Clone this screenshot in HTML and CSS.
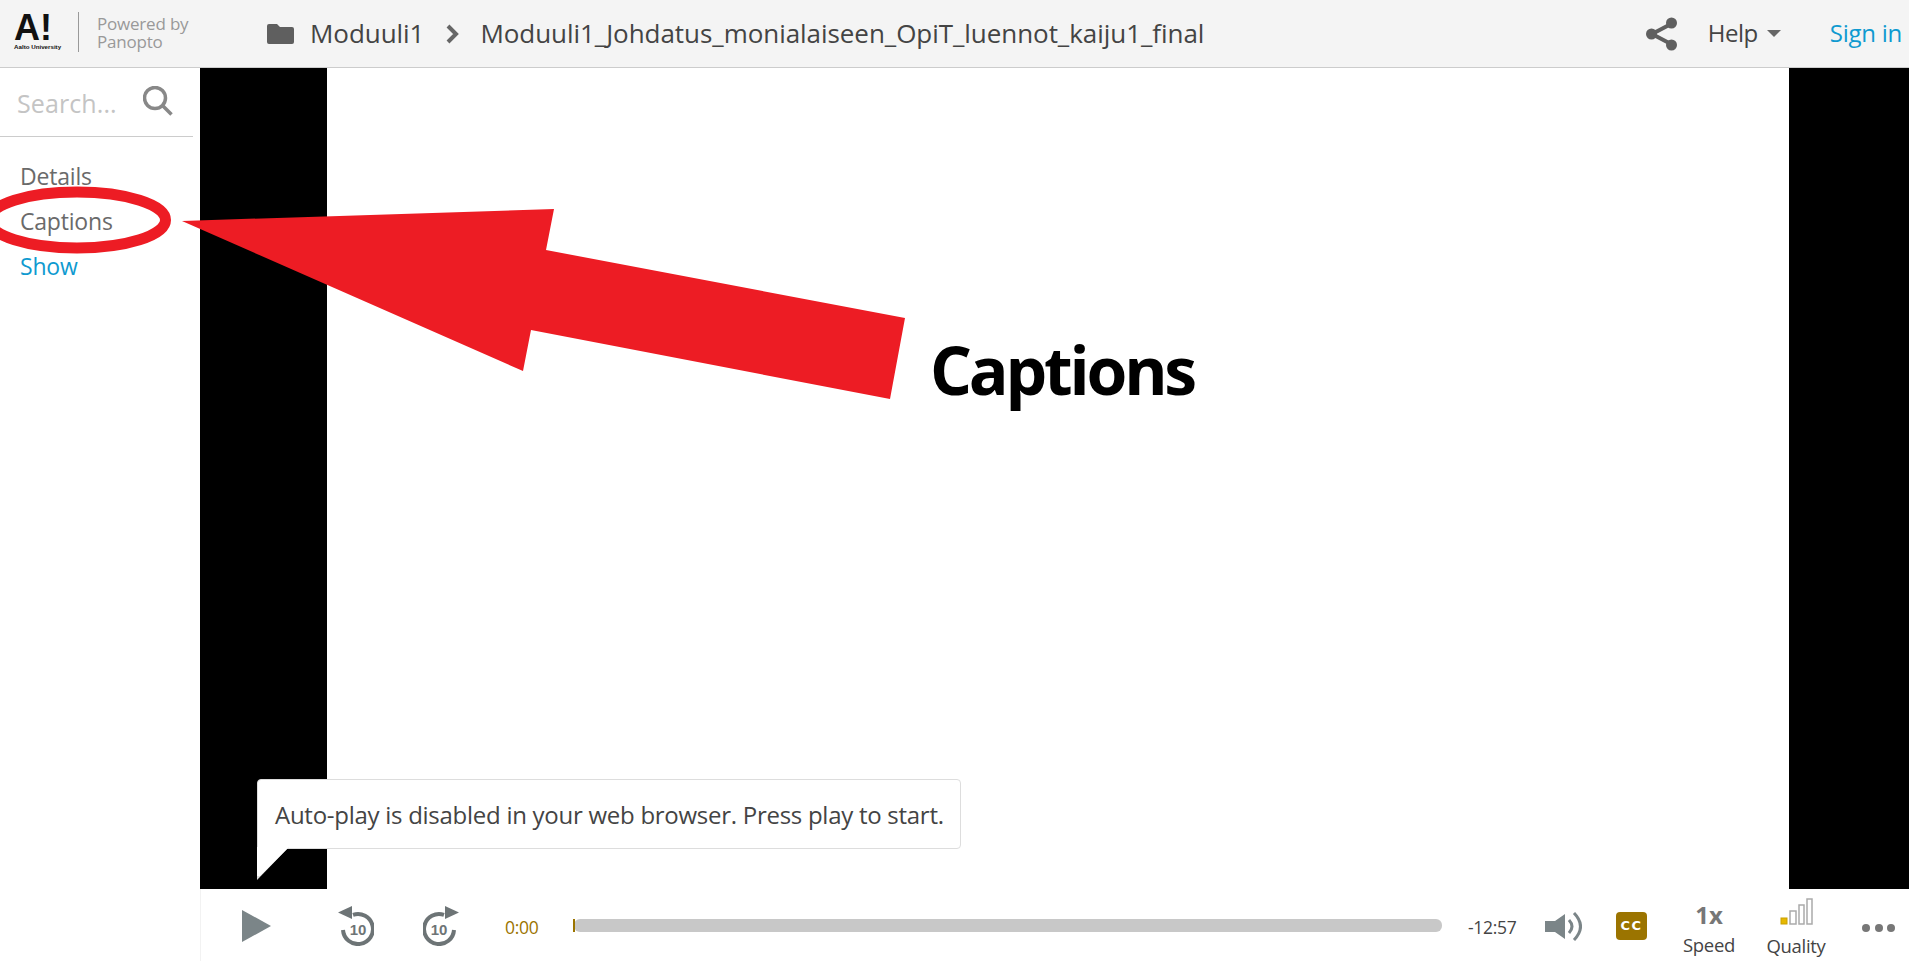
FILE: index.html
```html
<!DOCTYPE html>
<html lang="en">
<head>
<meta charset="utf-8">
<title>Moduuli1_Johdatus_monialaiseen_OpiT_luennot_kaiju1_final</title>
<link rel="stylesheet" href="styles.css">
</head>
<body>
<div class="app">
  <header class="topbar">
    <div class="logo">
      <span class="logo-mark">A!</span>
      <span class="logo-sub">Aalto University</span>
    </div>
    <div class="powered">Powered by<br>Panopto</div>
    <nav class="crumbs">
      <svg class="folder" viewBox="0 0 27 20"><path d="M2 0h8l3 3h12a2 2 0 0 1 2 2v13a2 2 0 0 1-2 2H2a2 2 0 0 1-2-2V2a2 2 0 0 1 2-2z"/></svg>
      <span class="crumb">Moduuli1</span>
      <svg class="chev" viewBox="0 0 13 20"><path d="M2 2l8 8-8 8"/></svg>
      <span class="crumb">Moduuli1_Johdatus_monialaiseen_OpiT_luennot_kaiju1_final</span>
    </nav>
    <div class="top-actions">
      <svg class="share" viewBox="0 0 31 34"><path class="share-line" d="M25 7L6 17l19 10"/><circle cx="25.500" cy="6" r="5.500"/><circle cx="5.500" cy="17" r="5.500"/><circle cx="25.500" cy="28" r="5.500"/></svg>
      <span class="help">Help</span>
      <span class="caret"></span>
      <a class="signin">Sign in</a>
    </div>
  </header>
  <main class="body">
    <aside class="side">
      <div class="search">
        <span class="placeholder">Search...</span>
        <svg class="search-icon" viewBox="0 0 30 30"><circle cx="12" cy="12" r="10.500"/><path d="M19 19l9.500 9.500"/></svg>
      </div>
      <ul class="tabs">
        <li class="tab">Details</li>
        <li class="tab">Captions</li>
        <li class="tab link">Show</li>
      </ul>
    </aside>
    <section class="player">
      <div class="video">
        <div class="pillar-l"></div>
        <div class="slide"></div>
        <div class="pillar-r"></div>
        <div class="tip">Auto-play is disabled in your web browser. Press play to start.
          <svg class="tip-tail" viewBox="0 0 34 34"><path class="tail-edge" d="M1 33V0h32z"/><path class="tail-fill" d="M1 0h32L4 29H1z"/></svg>
        </div>
      </div>
      <div class="controls">
        <svg class="play" viewBox="0 0 29 32"><path d="M0 0l29 16L0 32z"/></svg>
        <svg class="skip back" viewBox="0 0 36 40"><path class="ring" d="M15 8.900A15 15 0 1 1 5 24"/><path class="head" d="M14 0L0 6.500 14 13z"/><text x="20" y="28.500" class="skip-num">10</text></svg>
        <svg class="skip fwd" viewBox="0 0 36 40"><path class="ring" d="M21 8.900A15 15 0 1 0 31 24"/><path class="head" d="M22 0l14 6.500-14 6.500z"/><text x="16" y="28.500" class="skip-num">10</text></svg>
        <span class="time">0:00</span>
        <div class="track"><div class="played"></div></div>
        <span class="remain">-12:57</span>
        <svg class="volume" viewBox="0 0 37 29"><path class="cone" d="M0 9h10L20 2v25L10 20H0z"/><path class="wave" d="M24 8q6 6.500 0 13M29 1q13 13.500 0 27"/></svg>
        <div class="cc">CC</div>
        <div class="ctl speed"><b class="speed-val">1x</b><span class="ctl-label">Speed</span></div>
        <div class="ctl quality">
          <svg class="bars" viewBox="0 0 33 27"><rect class="bar-on" x="1" y="20" width="6" height="6"/><rect class="bar" x="10" y="13" width="6" height="13"/><rect class="bar" x="19" y="7" width="5" height="19"/><rect class="bar" x="27" y="1" width="5" height="25"/></svg>
          <span class="ctl-label">Quality</span>
        </div>
        <div class="more"><i></i><i></i><i></i></div>
      </div>
    </section>
  </main>
  <svg class="annot" viewBox="0 0 1909 961">
    <ellipse class="ring-red" cx="77" cy="220" rx="88.500" ry="28"/>
    <path class="arrow" d="M182 221L554 209 546 250 905 318 890 399 531 330 523 371z"/>
  </svg>
  <div class="annot-label">Captions</div>
</div>
</body>
</html>
```
FILE: styles.css
```css
* { box-sizing: border-box; }
html, body { margin: 0; height: 100%; overflow: hidden; background: #fff; }
body { font-family: "Open Sans", "Noto Sans", sans-serif; color: #444; }
.app { position: relative; width: 100%; height: 100vh; display: flex; flex-direction: column; }

.topbar { height: 68px; flex: none; background: #f4f4f4; border-bottom: 1px solid #ccc; display: flex; align-items: center; }
.logo { width: 79px; height: 40px; margin-top: -4px; padding-left: 14px; border-right: 1px solid #999; display: flex; flex-direction: column; color: #111; flex: none; }
.logo-mark { font: 700 36px/31px "Liberation Sans", sans-serif; }
.logo-sub { font: 700 6.200px/8px "Liberation Sans", sans-serif; white-space: nowrap; }
.powered { width: 169px; padding-left: 18px; margin-top: -1px; flex: none; font-size: 17px; line-height: 18px; color: #999; letter-spacing: -.2px; }
.crumbs { display: flex; align-items: center; flex: none; margin-top: -2px; }
.folder { width: 27px; height: 20px; fill: #5f5f5f; margin: 2px 16px 0 19px; }
.crumb { font-size: 26px; line-height: 34px; letter-spacing: -.05px; color: #444; white-space: nowrap; }
.chev { width: 13px; height: 20px; margin: 2px 21px 0 22px; fill: none; stroke: #666; stroke-width: 4; }
.top-actions { margin-left: auto; display: flex; align-items: center; flex: none; padding-right: 7px; }
.share { width: 31px; height: 34px; fill: #5f5f5f; margin-right: 31px; }
.share-line { fill: none; stroke: #5f5f5f; stroke-width: 4; }
.help { font-size: 24px; letter-spacing: -.5px; color: #444; margin-top: -2px; }
.caret { width: 0; height: 0; margin: 0 49px 0 9px; border: 7px solid transparent; border-top-color: #666; border-bottom: 0; }
.signin { font-size: 24px; letter-spacing: -.25px; color: #0f9ad0; margin-top: -2px; }

.body { flex: 1; display: flex; min-height: 0; }
.side { width: 200px; flex: none; padding-right: 7px; }
.search { height: 69px; border-bottom: 1px solid #ccc; padding: 17px 0 0 17px; display: flex; align-items: flex-start; }
.placeholder { font-size: 25px; line-height: 36px; color: #c4c4c4; letter-spacing: .1px; width: 126px; flex: none; }
.search-icon { width: 30px; height: 30px; margin-top: 1px; fill: none; stroke: #888; stroke-width: 3.500; }
.tabs { list-style: none; margin: 0; padding: 17px 0 0 20px; }
.tab { font-size: 23px; line-height: 45px; letter-spacing: -.2px; color: #6a6a6a; }
.tab.link { color: #0f9ad0; }

.player { flex: 1; min-width: 0; display: flex; flex-direction: column; }
.video { flex: 1; position: relative; display: flex; min-height: 0; }
.pillar-l { width: 127px; background: #000; }
.slide { flex: 1; background: #fff; }
.pillar-r { width: 120px; background: #000; }
.tip { position: absolute; left: 57px; top: 711px; width: 704px; height: 70px; padding-left: 17px; background: #fff; border: 1px solid #ddd; border-radius: 4px 4px 4px 0; font-size: 24px; line-height: 70px; letter-spacing: -.27px; color: #444; white-space: nowrap; }
.tip-tail { position: absolute; left: -2px; top: 67px; width: 34px; height: 34px; }
.tail-edge { fill: #ddd; }
.tail-fill { fill: #fff; }

.controls { height: 72px; flex: none; display: flex; align-items: center; border-left: 1px solid #f2f2f2; position: relative; }
.play { width: 29px; height: 32px; margin: 2px 0 0 41px; fill: #7b8588; flex: none; }
.skip { width: 36px; height: 40px; flex: none; margin-top: 2px; }
.skip.back { margin-left: 67px; }
.skip.fwd { margin-left: 49px; }
.ring { fill: none; stroke: #6d7476; stroke-width: 4; }
.head { fill: #6d7476; }
.skip-num { font: 700 15px "Liberation Sans", sans-serif; text-anchor: middle; fill: #6d7476; }
.time { width: 68px; margin: 4px 0 0 46px; flex: none; font-size: 17.500px; letter-spacing: -.3px; color: #9b7400; }
.track { width: 868px; height: 13px; flex: none; background: #c8c8c8; border-radius: 6px; position: relative; margin-left: 1px; }
.played { position: absolute; left: -1px; top: 0; width: 2px; height: 13px; background: #9b7400; }
.remain { width: 77px; margin: 4px 0 0 26px; flex: none; font-size: 17.500px; letter-spacing: -.3px; color: #444; }
.volume { width: 37px; height: 29px; flex: none; margin-top: 2px; }
.cone { fill: #7b8588; }
.wave { fill: none; stroke: #7b8588; stroke-width: 3; }
.cc { width: 31px; height: 28px; margin: 2px 0 0 34px; flex: none; background: #9b7400; border-radius: 4px; font: 700 13px/28px "DejaVu Sans", sans-serif; letter-spacing: 1.500px; text-align: center; color: #fff; }
.ctl { display: flex; flex-direction: column; align-items: center; flex: none; align-self: flex-start; }
.speed { width: 70px; margin-left: 27px; padding-top: 10px; }
.speed-val { font-size: 24px; line-height: 32px; color: #777; }
.ctl-label { font-size: 18.500px; line-height: 28px; letter-spacing: -.3px; color: #444; }
.quality { width: 70px; margin-left: 17px; padding-top: 9px; }
.bars { width: 33px; height: 27px; display: block; margin-bottom: 7px; }
.bar { fill: none; stroke: #aaa; stroke-width: 1.500; }
.bar-on { fill: #e6b800; stroke: #c9a000; stroke-width: 1; }
.more { display: flex; gap: 4.500px; margin-left: 31px; margin-top: 6px; flex: none; }
.more i { width: 8px; height: 8px; border-radius: 50%; background: #777; }

.annot { position: absolute; left: 0; top: 0; width: 1909px; height: 961px; pointer-events: none; }
.arrow { fill: #ed1c24; }
.ring-red { fill: none; stroke: #ed1c24; stroke-width: 11; }
.annot-label { position: absolute; left: 930px; top: 324px; font-size: 66px; line-height: 90px; font-weight: 700; color: #000; letter-spacing: -3.200px; white-space: nowrap; }
```
